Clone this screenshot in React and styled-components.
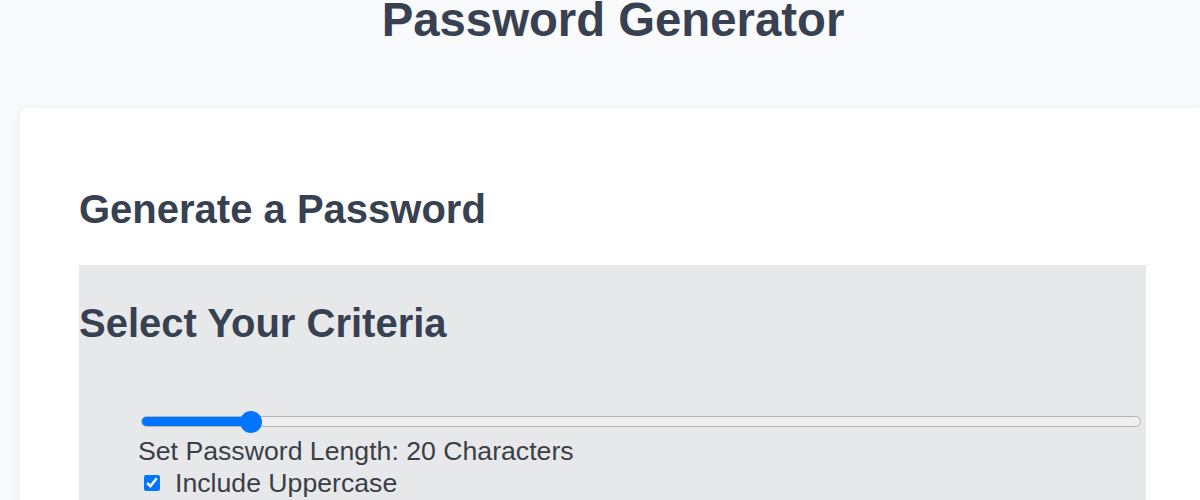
import React, { useState } from "react";
import styled, { createGlobalStyle } from "styled-components";

const GlobalStyle = createGlobalStyle`
  html, body {
    margin: 0;
    padding: 0;
    background: #f9fafb;
    overflow: hidden;
    font-family: "Liberation Sans", Arial, sans-serif;
    color: #374151;
  }
`;

const Page = styled.div`
  width: 1226px;
  box-sizing: border-box;
  padding: 0 20px 40px;
`;

const Title = styled.h1`
  margin: 0 0 68px;
  font-size: 47.3px;
  line-height: 40px;
  font-weight: 700;
  text-align: center;
  color: #374151;
`;

const Card = styled.div`
  background: #ffffff;
  border-radius: 8px;
  box-shadow: 0 2px 10px rgba(0, 0, 0, 0.08);
  padding: 78px 60px 60px 59px;
`;

const Heading = styled.h2`
  margin: 0;
  font-size: 40px;
  line-height: 46px;
  font-weight: 700;
  color: #374151;
`;

const Criteria = styled.section`
  margin-top: 33px;
  background: #e7e8ea;
  padding: 35px 0 30px;
`;

const Controls = styled.div`
  margin-top: 64px;
  padding-left: 59px;
  width: 1006px;
  display: flex;
  flex-direction: column;
`;

const Range = styled.input.attrs({ type: "range" })`
  -webkit-appearance: none;
  appearance: none;
  width: 1000px;
  height: 11px;
  margin: 6px 2px 8px 3px;
  border-radius: 6px;
  border: 1px solid #b4b4b4;
  box-sizing: border-box;
  background: ${({ $fill }) =>
    `linear-gradient(to right, #0075ff 0%, #0075ff ${$fill}, #efefef ${$fill}, #efefef 100%)`};
  outline: none;

  &::-webkit-slider-thumb {
    -webkit-appearance: none;
    width: 22px;
    height: 22px;
    border-radius: 50%;
    background: #0075ff;
    border: none;
  }
`;

const Label = styled.label`
  display: flex;
  align-items: center;
  font-size: 26.67px;
  line-height: 32px;
  color: #3a3f47;
`;

const Check = styled.input.attrs({ type: "checkbox" })`
  width: 16px;
  height: 16px;
  margin: 0 15px 0 6px;
  accent-color: #0075ff;
`;

const options = [
  "Include Uppercase",
  "Include Lowercase",
  "Include Numbers",
  "Include Symbols",
];

export default function App() {
  const [length, setLength] = useState(20);
  const [checked, setChecked] = useState([true, true, true, true]);
  const min = 8;
  const max = 128;
  const pct = (length - min) / (max - min);
  const fill = `calc(11px + ${pct} * 978px)`;

  return (
    <Page>
      <GlobalStyle />
      <Title>Password Generator</Title>
      <Card>
        <Heading>Generate a Password</Heading>
        <Criteria>
          <Heading>Select Your Criteria</Heading>
          <Controls>
            <Range
              min={min}
              max={max}
              value={length}
              $fill={fill}
              onChange={(e) => setLength(Number(e.target.value))}
            />
            <Label as="div">Set Password Length: {length} Characters</Label>
            {options.map((o, i) => (
              <Label key={o}>
                <Check
                  checked={checked[i]}
                  onChange={() =>
                    setChecked((c) => c.map((v, j) => (j === i ? !v : v)))
                  }
                />
                {o}
              </Label>
            ))}
          </Controls>
        </Criteria>
      </Card>
    </Page>
  );
}
